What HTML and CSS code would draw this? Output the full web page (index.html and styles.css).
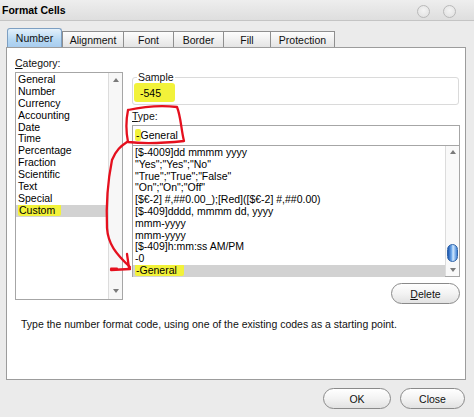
FILE: index.html
```html
<!DOCTYPE html>
<html>
<head>
<meta charset="utf-8">
<title>Format Cells</title>
<link rel="stylesheet" href="styles.css">
</head>
<body>
<div class="win">
  <div class="titlebar">
    <span class="title">Format Cells</span>
    <span class="wbtns"><i class="wb"></i><i class="wb"></i></span>
  </div>
  <div class="tabs">
    <div class="tab sel">Number</div>
    <div class="tab">Alignment</div>
    <div class="tab">Font</div>
    <div class="tab">Border</div>
    <div class="tab">Fill</div>
    <div class="tab">Protection</div>
  </div>
  <div class="panel">
    <div class="main">
      <div class="catcol">
        <div class="lbl"><u>C</u>ategory:</div>
        <div class="catlist">
          <div class="items">
            <div class="it">General</div>
            <div class="it">Number</div>
            <div class="it">Currency</div>
            <div class="it">Accounting</div>
            <div class="it">Date</div>
            <div class="it">Time</div>
            <div class="it">Percentage</div>
            <div class="it">Fraction</div>
            <div class="it">Scientific</div>
            <div class="it">Text</div>
            <div class="it">Special</div>
            <div class="it selrow"><span class="hl">Custom</span></div>
          </div>
          <div class="vscroll light">
            <span class="arr up"></span>
            <span class="arr down"></span>
          </div>
        </div>
      </div>
      <div class="rightcol">
        <fieldset class="sample">
          <legend>Sample</legend>
          <span class="hl hlsample">-545</span>
        </fieldset>
        <div class="lbl typelbl"><u>T</u>ype:</div>
        <div class="typeinput"><span class="hl">-</span>General</div>
        <div class="fmtlist">
          <div class="items">
            <div class="it">[$-4009]dd mmmm yyyy</div>
            <div class="it">"Yes";"Yes";"No"</div>
            <div class="it">"True";"True";"False"</div>
            <div class="it">"On";"On";"Off"</div>
            <div class="it">[$€-2] #,##0.00_);[Red]([$€-2] #,##0.00)</div>
            <div class="it">[$-409]dddd, mmmm dd, yyyy</div>
            <div class="it">mmm-yyyy</div>
            <div class="it">mmm-yyyy</div>
            <div class="it">[$-409]h:mm:ss AM/PM</div>
            <div class="it">-0</div>
            <div class="it selrow"><span class="hl">-General</span></div>
          </div>
          <div class="vscroll">
            <span class="arr up"></span>
            <span class="thumbwrap"><span class="thumb"></span></span>
            <span class="arr down"></span>
          </div>
        </div>
        <div class="delrow"><button class="btn del"><u>D</u>elete</button></div>
      </div>
    </div>
    <div class="desc">Type the number format code, using one of the existing codes as a starting point.</div>
  </div>
  <div class="footer">
    <button class="btn ok">OK</button>
    <button class="btn close">Close</button>
  </div>
</div>
<svg class="annot" width="474" height="417" viewBox="0 0 474 417">
  <g fill="none" stroke="#e5101e" stroke-width="2.3" stroke-linecap="round" stroke-linejoin="round">
    <path d="M128 110 C 142 107, 160 105, 177 107 C 181 117, 181 129, 184 141 C 165 143, 145 144, 128 142 C 126 132, 126 120, 128 110"/>
    <path d="M127 142 C 121 146, 116 150, 112 160 C 108 180, 106 205, 107 228 C 108 244, 116 254, 130 267"/>
    <path d="M127 254 L 129 268"/>
    <path d="M111 270 L 130 269"/>
    <path d="M111 268.5 L 117 268.5" stroke-width="2"/>
  </g>
</svg>
</body>
</html>
```
FILE: styles.css
```css
* { box-sizing: border-box; }

body {
  margin: 0;
  width: 474px;
  height: 417px;
  overflow: hidden;
  position: relative;
  background: #ebebeb;
  font-family: "Liberation Sans", Arial, sans-serif;
  font-size: 10.5px;
  color: #000;
}

.win {
  display: flex;
  flex-direction: column;
  height: 417px;
}

.titlebar {
  height: 21px;
  display: flex;
  align-items: center;
  justify-content: space-between;
  padding: 0 18px 0 2px;
  background: linear-gradient(#eeeeee, #dedede);
  border-bottom: 1px solid #c4c4c4;
}

.title {
  font-weight: bold;
  font-size: 10.5px;
}

.wbtns {
  display: flex;
  gap: 13px;
  margin-top: 2px;
}

.wb {
  display: block;
  width: 13px;
  height: 13px;
  border-radius: 50%;
  border: 1px solid #b9b9b9;
  background: radial-gradient(circle at 50% 40%, #f4f4f4, #dedede);
}

.tabs {
  height: 26px;
  display: flex;
  align-items: flex-end;
  padding-left: 7px;
}

.tab {
  height: 16px;
  padding: 0 8px;
  display: flex;
  align-items: center;
  justify-content: center;
  border: 1px solid #8f8f8f;
  border-bottom: none;
  border-left: none;
  background: linear-gradient(#fdfdfd, #e4e4e4);
  color: #111;
}

.tab:nth-child(2) { width: 62px; border-left: 1px solid #8f8f8f; }
.tab:nth-child(3) { width: 50px; }
.tab:nth-child(4) { width: 50px; }
.tab:nth-child(5) { width: 47px; }
.tab:nth-child(6) { width: 64px; }

.tab.sel {
  width: 55px;
  height: 19px;
  border: 1px solid #7d9fc2;
  border-bottom: none;
  border-radius: 3px 3px 0 0;
  background: linear-gradient(#e4f1fb, #b6d8f3 60%, #a8cdef);
}

.panel {
  margin-left: 6px;
  width: 460px;
  height: 333px;
  border: 1px solid #9c9c9c;
  background: #fff;
  padding: 9px 5px 0 7px;
}

.main {
  display: flex;
  gap: 9px;
}

.catcol {
  width: 109px;
  padding-left: 1px;
}

.lbl {
  height: 13px;
  line-height: 13px;
  color: #111;
}

.catlist {
  margin-top: 2px;
  width: 108px;
  height: 228px;
  border: 1px solid #a6a6a6;
  display: flex;
  background: #fff;
}

.items {
  flex: 1;
}

.catlist .items {
  padding-top: 1px;
}

.catlist .it {
  height: 11.9px;
  line-height: 11.9px;
}

.it {
  height: 11.8px;
  line-height: 11.8px;
  padding-left: 2px;
  white-space: nowrap;
  overflow: hidden;
}

.selrow {
  background: #d2d2d2;
}

.hl {
  background: #f2f23a;
  border-radius: 2px;
  padding: 0 1px;
}

.catlist .selrow .hl { padding: 0 6px 0 1px; }

.vscroll {
  width: 14px;
  border-left: 1px solid #dcdcdc;
  background: #f7f7f7;
  display: flex;
  flex-direction: column;
  justify-content: space-between;
  align-items: center;
  padding: 5px 0 6px;
}

.arr {
  width: 0;
  height: 0;
  border-left: 3px solid transparent;
  border-right: 3px solid transparent;
}

.arr.up { border-bottom: 4px solid #7a7a7a; }
.arr.down { border-top: 4px solid #7a7a7a; }

.rightcol {
  width: 328px;
  padding-top: 14px;
  display: flex;
  flex-direction: column;
}

.sample {
  margin: 0;
  width: 327px;
  height: 34px;
  border: 1px solid #dadada;
  border-radius: 3px;
  padding: 0 0 0 1px;
}

.sample legend {
  padding: 0 1px;
  margin-left: 3px;
  line-height: 12px;
  color: #111;
}

.hlsample {
  display: inline-block;
  padding: 4px 14px 3px 6px;
  line-height: 12px;
  border-radius: 3px;
}

.typelbl {
  margin-top: 5px;
}

.typeinput {
  margin-top: 2px;
  height: 20px;
  line-height: 18px;
  border: 1px solid #a6a6a6;
  border-bottom: none;
  padding-left: 2px;
}

.fmtlist {
  height: 132px;
  border: 1px solid #a6a6a6;
  display: flex;
}

.fmtlist .items {
  padding-top: 1px;
}

.fmtlist .selrow .hl { padding: 0 7px 0 1px; }

.fmtlist .vscroll {
  padding: 4px 0 4px;
  background: #f9f9f9;
}

.thumbwrap {
  flex: 1;
  display: flex;
  align-items: flex-end;
  padding-bottom: 6px;
}

.thumb {
  display: block;
  width: 11px;
  height: 18px;
  border-radius: 6px;
  border: 1px solid #2f63a8;
  background: linear-gradient(90deg, #1b56b0, #7fb7f3 45%, #d7ecff 55%, #3f82d6);
}

.delrow {
  display: flex;
  justify-content: flex-end;
  margin-top: 6px;
}

.btn {
  font-family: inherit;
  font-size: 10.5px;
  color: #111;
  height: 21px;
  border-radius: 11px;
  border: 1px solid #8a8a8a;
  background: linear-gradient(#ffffff, #f3f3f3 50%, #e2e2e2);
  padding: 0;
}

.del { width: 69px; }

.desc {
  margin-top: 14px;
  padding-left: 7px;
  line-height: 13px;
  color: #111;
}

.footer {
  display: flex;
  justify-content: flex-end;
  gap: 9px;
  padding-right: 9px;
  margin-top: 8px;
}

.ok { width: 68px; }
.close { width: 65px; }

.annot {
  position: absolute;
  left: 0;
  top: 0;
  pointer-events: none;
}
```
